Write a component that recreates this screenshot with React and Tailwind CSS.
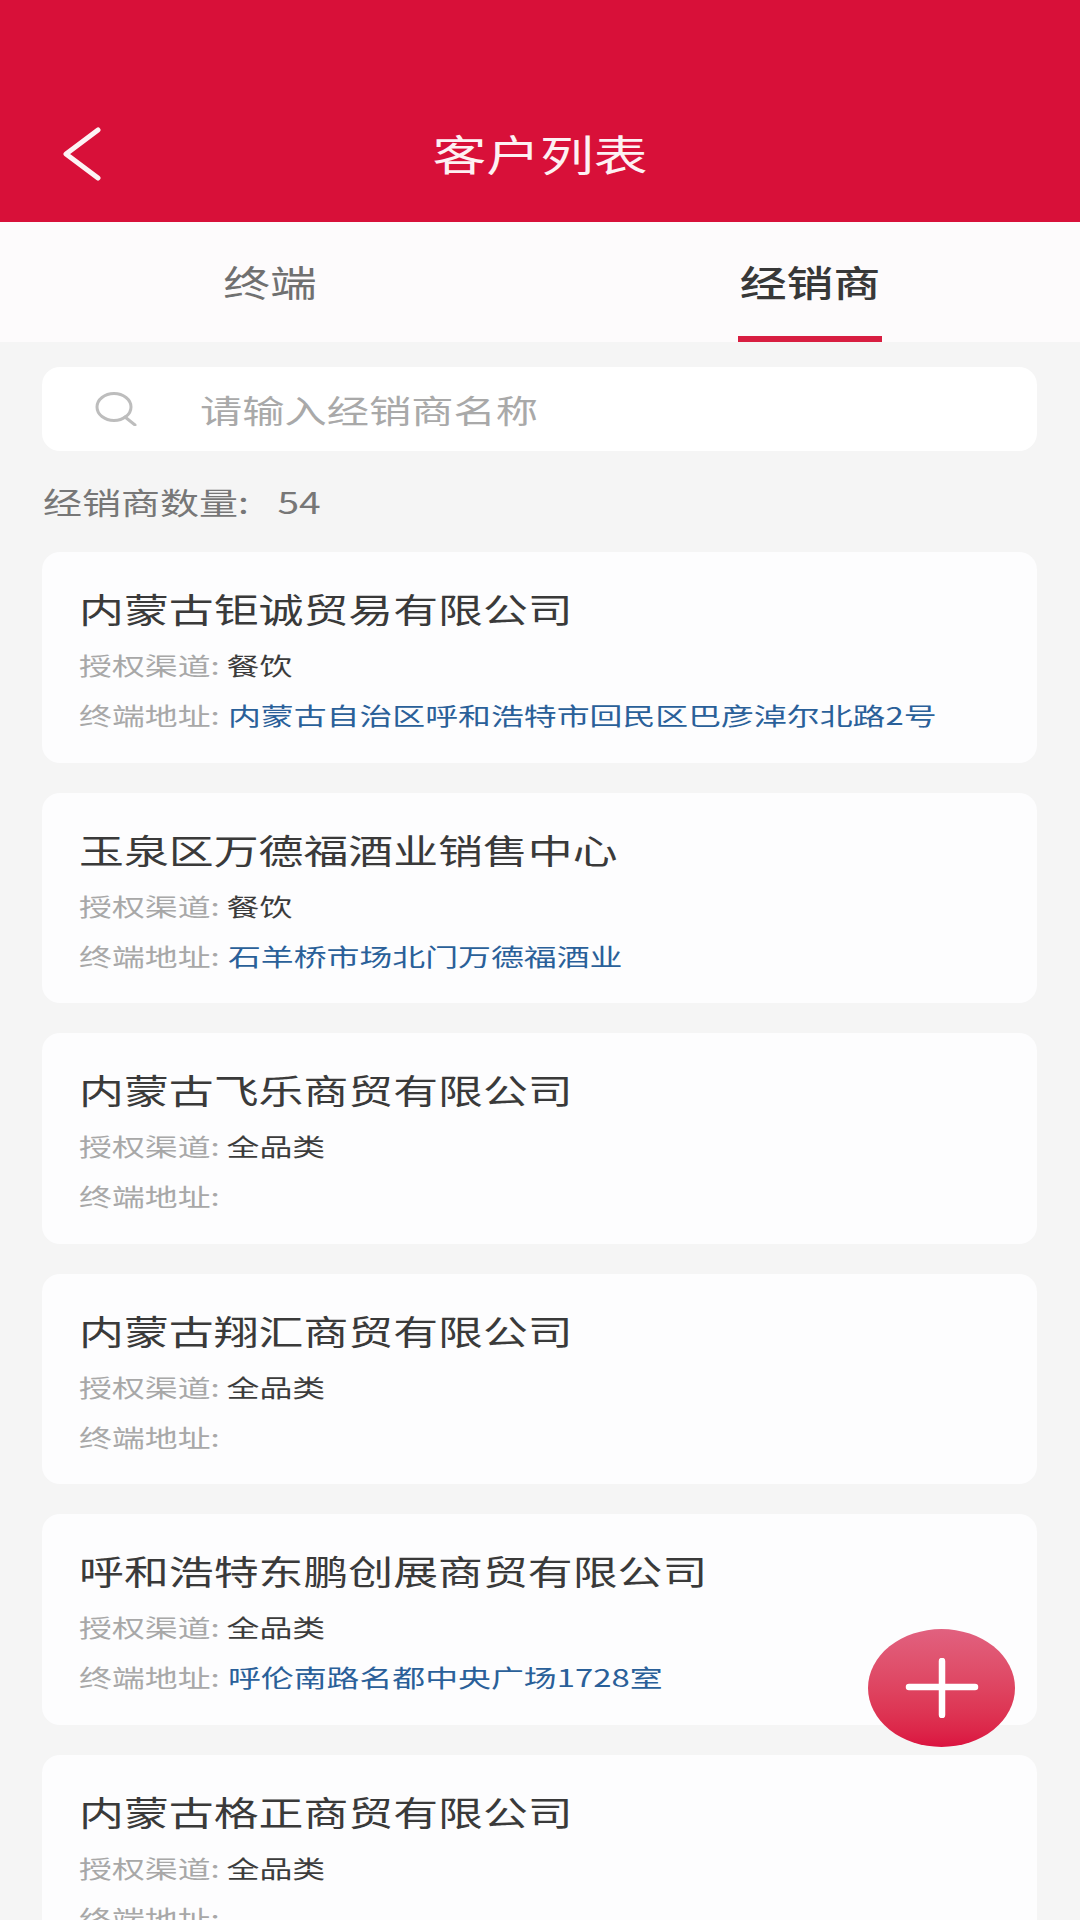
import React from "react";

const dealers = [
  { name: "内蒙古钜诚贸易有限公司", channel: "餐饮", address: "内蒙古自治区呼和浩特市回民区巴彦淖尔北路2号" },
  { name: "玉泉区万德福酒业销售中心", channel: "餐饮", address: "石羊桥市场北门万德福酒业" },
  { name: "内蒙古飞乐商贸有限公司", channel: "全品类", address: "" },
  { name: "内蒙古翔汇商贸有限公司", channel: "全品类", address: "" },
  { name: "呼和浩特东鹏创展商贸有限公司", channel: "全品类", address: "呼伦南路名都中央广场1728室" },
  { name: "内蒙古格正商贸有限公司", channel: "全品类", address: "" },
];

const DealerCard = ({ dealer }) => (
  <div className="h-[210.5px] shrink-0 rounded-[18px] bg-[#fdfdfe] pl-[37px] pt-[34px]">
    <div className="h-[46px] origin-left scale-x-[1.32] whitespace-nowrap text-[34px] leading-[46px] text-[#3a3a3a]">
      {dealer.name}
    </div>
    <div className="mt-[15px] h-[36px] origin-left scale-x-[1.37] whitespace-nowrap text-[24px] leading-[36px] text-[#a8a8a8]">
      授权渠道:<span className="ml-[5px] text-[#3c3c3c]">{dealer.channel}</span>
    </div>
    <div className="mt-[14px] h-[36px] origin-left scale-x-[1.37] whitespace-nowrap text-[24px] leading-[36px] text-[#a8a8a8]">
      终端地址:<span className="ml-[6px] text-[#2a6099]">{dealer.address}</span>
    </div>
  </div>
);

export default function App() {
  return (
    <div className="relative flex h-[1920px] w-[1080px] flex-col overflow-hidden bg-[#f5f5f5] font-['Noto_Sans_CJK_SC',sans-serif]">
      {/* header */}
      <div className="relative flex h-[222px] shrink-0 items-end justify-center bg-[#d81039] pb-[40px]">
        <svg className="absolute left-[61px] top-[127px]" width="42" height="56" viewBox="0 0 42 56" fill="none">
          <path d="M37 3 L5 27 L37 51" stroke="#fdf3f5" strokeWidth="5" strokeLinecap="round" strokeLinejoin="round" />
        </svg>
        <div className="scale-x-[1.28] text-[42px] leading-[58px] text-[#fdf1f3]">客户列表</div>
      </div>

      {/* tabs */}
      <div className="flex h-[120px] shrink-0 bg-[#fdfbfc]">
        <div className="flex flex-1 justify-center pt-[34px]">
          <div className="scale-x-[1.3] text-[36px] leading-[50px] text-[#707070]">终端</div>
        </div>
        <div className="flex flex-1 flex-col items-center pt-[34px]">
          <div className="scale-x-[1.3] text-[36px] font-medium leading-[50px] text-[#383838]">经销商</div>
          <div className="mt-auto h-[6px] w-[144px] bg-[#d81e41]" />
        </div>
      </div>

      {/* search */}
      <div className="ml-[42px] mr-[43px] mt-[25px] flex h-[84px] shrink-0 items-center rounded-[18px] bg-white pl-[53px]">
        <svg width="42" height="34" viewBox="0 0 42 34" fill="none" className="shrink-0">
          <ellipse cx="19" cy="15" rx="17" ry="13.5" stroke="#bdbdbd" strokeWidth="3" />
          <path d="M30 25 L40 33" stroke="#bdbdbd" strokeWidth="3" strokeLinecap="round" />
        </svg>
        <div className="ml-[63px] origin-left scale-x-[1.32] whitespace-nowrap text-[32px] leading-[44px] text-[#a9a9a9]">
          请输入经销商名称
        </div>
      </div>

      {/* count */}
      <div className="ml-[43px] mt-[28px] h-[44px] shrink-0 origin-left scale-x-[1.3] whitespace-nowrap text-[30px] leading-[44px] text-[#777777]">
        经销商数量:<span className="ml-[22px]">54</span>
      </div>

      {/* list */}
      <div className="ml-[42px] mr-[43px] mt-[29px] flex flex-col gap-[30px]">
        {dealers.map((d) => (
          <DealerCard key={d.name} dealer={d} />
        ))}
      </div>

      {/* add button */}
      <div className="absolute left-[868px] top-[1629px] flex h-[118px] w-[147px] items-center justify-center rounded-[50%] bg-gradient-to-b from-[#e1617f] to-[#db1240]">
        <svg width="74" height="60" viewBox="0 0 74 60" fill="none">
          <path d="M4 29 H70 M37 3 V57" stroke="#fff" strokeWidth="6.5" strokeLinecap="round" />
        </svg>
      </div>
    </div>
  );
}
